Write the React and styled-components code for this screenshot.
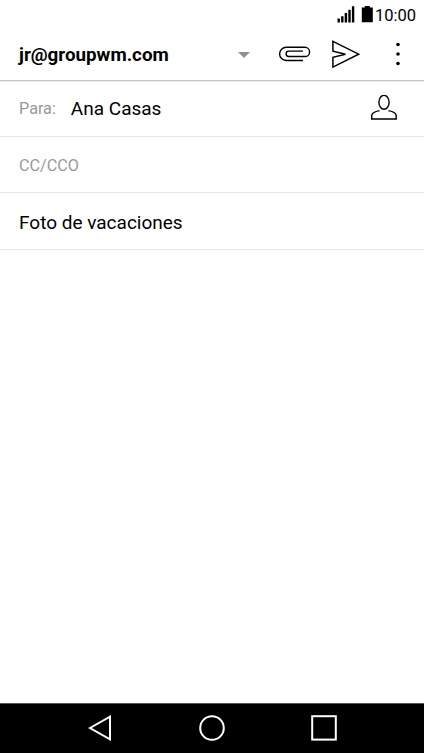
import React from 'react';
import styled, { createGlobalStyle } from 'styled-components';

const GlobalStyle = createGlobalStyle`
    body {
        margin: 0;
        background: #fff;
    }
`;

const Screen = styled.div`
    display: flex;
    flex-direction: column;
    height: 753px;
    overflow: hidden;
    background: #fff;
    color: #000;
    font-family: Roboto, sans-serif;
`;

const StatusBar = styled.div`
    display: flex;
    flex: none;
    align-items: center;
    justify-content: flex-end;
    height: 30px;
    padding-right: 8px;
    box-sizing: border-box;
`;

const Clock = styled.span`
    width: 41px;
    margin-left: 2px;
    padding-top: 1px;
    font-size: 16.5px;
    line-height: 29px;
    white-space: nowrap;
`;

const Icon = styled.svg`
    display: block;
    flex: none;
    fill: none;
    stroke: ${ ({ $color }) => $color || '#000' };
    stroke-width: ${ ({ $stroke }) => $stroke || 1.4 };
`;

const SolidIcon = styled(Icon)`
    fill: ${ ({ $color }) => $color || '#000' };
    stroke: none;
`;

const Header = styled.header`
    display: flex;
    flex: none;
    align-items: center;
    height: 50px;
    padding-left: 19px;
    border-bottom: 1px solid #c8c8c8;
    box-shadow: 0 1px 1px #ececec;
`;

const Account = styled.div`
    display: flex;
    align-items: center;
    justify-content: space-between;
    width: 231px;
    font-size: 18.8px;
    font-weight: 700;
    line-height: 22px;
`;

const Actions = styled.div`
    display: flex;
    align-items: center;
    margin-left: 28px;
`;

const Row = styled.div`
    display: flex;
    flex: none;
    align-items: center;
    height: ${ ({ $height }) => $height }px;
    padding: ${ ({ $top }) => $top || 0 }px 26px 0 19px;
    border-bottom: 1px solid #e6e6e6;
    box-sizing: border-box;
`;

const Label = styled.span`
    color: #999;
    font-size: 16.2px;
`;

const Value = styled.span`
    flex: 1;
    margin-left: ${ ({ $indent }) => $indent || 0 }px;
    font-size: 19px;
`;

const Body = styled.main`
    flex: 1;
`;

const NavBar = styled.nav`
    display: flex;
    flex: none;
    align-items: center;
    justify-content: space-between;
    height: 50px;
    padding: 0 86px 1px;
    border-top: 1px solid #555;
    background: #000;
    box-sizing: border-box;
`;

const App = () => {
    return (
        <Screen>
            <GlobalStyle />
            <StatusBar>
                <SolidIcon width="36" height="30">
                    <path d="M0.5 18.5h2.4v4h-2.4zM4.1 16.2h2.4v6.3h-2.4zM7.7 13h2.4v9.5h-2.4zM11.3 9.8h2.4v12.7h-2.4zM14.9 6.2h2.4v16.3h-2.4z" />
                    <path d="M24.8 7.5h3v-1.5h5v1.5h3v14.8h-11z" />
                </SolidIcon>
                <Clock>10:00</Clock>
            </StatusBar>
            <Header>
                <Account>
                    <span>jr@groupwm.com</span>
                    <SolidIcon width="12" height="6" $color="#909090">
                        <path d="M0 0h12l-6 6z" />
                    </SolidIcon>
                </Account>
                <Actions>
                    <Icon width="34" height="30">
                        <path d="M25 20.5H8.2a6.6 6.6 0 0 1 0-13.2H27a4.6 4.6 0 0 1 0 9.2H10.8a2.7 2.7 0 0 1 0-5.4H25" />
                    </Icon>
                    <Icon width="50" height="34" $stroke="1.5">
                        <path d="M20.9 3.3L46.7 16.2L20.9 29.1V19.3L33.5 16.2L20.9 13.2Z" />
                    </Icon>
                    <SolidIcon width="60" height="30">
                        <circle cx="36" cy="4.5" r="1.8" />
                        <circle cx="36" cy="14" r="1.8" />
                        <circle cx="36" cy="23.5" r="1.8" />
                    </SolidIcon>
                </Actions>
            </Header>
            <Row $height={ 56 }>
                <Label>Para:</Label>
                <Value $indent={ 15 }>Ana Casas</Value>
                <Icon width="28" height="28">
                    <ellipse cx="14" cy="7.3" rx="5.1" ry="7" />
                    <path d="M9.6 15.6C4.5 16.5 1.7 18.3 1.7 20.8V24H26.2V20.8C26.2 18.3 23.5 16.5 18.4 15.6" />
                </Icon>
            </Row>
            <Row $height={ 56 } $top={ 2 }>
                <Label>CC/CCO</Label>
            </Row>
            <Row $height={ 57 } $top={ 2 }>
                <Value>Foto de vacaciones</Value>
            </Row>
            <Body />
            <NavBar>
                <Icon width="28" height="28" $color="#fff" $stroke="2">
                    <path d="M4 14L24 2.6V25.4Z" />
                </Icon>
                <Icon width="28" height="28" $color="#fff" $stroke="2">
                    <circle cx="14" cy="14" r="11.8" />
                </Icon>
                <Icon width="28" height="28" $color="#fff" $stroke="2">
                    <rect x="2.2" y="2.2" width="23.6" height="23.4" />
                </Icon>
            </NavBar>
        </Screen>
    );
};

export default App;
